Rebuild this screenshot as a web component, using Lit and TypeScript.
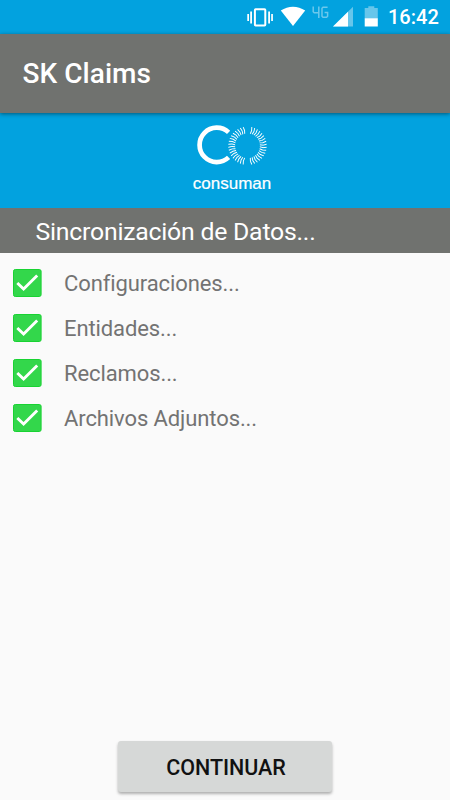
import { LitElement, html, svg, css } from "lit";
import { customElement, property } from "lit/decorators.js";

@customElement("status-bar")
class StatusBar extends LitElement {
  static styles = css`
    :host {
      display: flex;
      justify-content: flex-end;
      height: 34px;
      background: #02a2df;
      color: #fff;
    }
    .icons { flex: none; display: block; }
    .time {
      width: 62px;
      box-sizing: border-box;
      font: 500 20px/35px Roboto, sans-serif;
      white-space: nowrap;
    }
  `;
  render() {
    return html`
      <svg class="icons" width="148" height="34" viewBox="240 0 148 34" fill="#fff">
        <rect x="254.9" y="9.3" width="10.4" height="16.2" rx="0.8" fill="none" stroke="#fff" stroke-width="2" />
        <path d="M250.2 11.5h1.8v12h-1.8zM247.3 14h1.7v7h-1.7zM268.2 11.5h1.8v12h-1.8zM271.2 14h1.7v7h-1.7z" />
        <path d="M280.8 10.6Q286.5 6.8 293 6.8Q299.5 6.8 305.2 10.6L293 26z" />
        <g fill="none" stroke="#6cc8ec" stroke-width="1.5">
          <path d="M313.2 6.5v5.3l1 1h4.6M318.8 6.5v11.5" />
          <path d="M327.6 7.3h-4.6l-1 1v8l1 1h3.6l1-1v-3.8h-3" />
        </g>
        <path d="M353 6.8V26.5H333z" fill="#67c6eb" />
        <path d="M348 11.7V26.5H333z" />
        <path d="M368.3 6.2h6v1.8h3.5v10.3H364.7V8h3.6z" fill="#67c6eb" />
        <path d="M364.7 18.2h13.1v8.3H364.7z" />
      </svg>
      <span class="time">16:42</span>
    `;
  }
}

@customElement("brand-logo")
class BrandLogo extends LitElement {
  static styles = css`
    :host { display: block; height: 95px; }
    .mark { display: block; margin: 0 auto; }
    .name { font: 16.2px "Liberation Sans", Arial, sans-serif; }
  `;
  render() {
    const perSide = 18;
    const rays = Array.from({ length: perSide * 2 }, (_, i) => {
      const side = i < perSide ? 0 : 180;
      return side + 13 + (i % perSide) * (154 / (perSide - 1));
    });
    return html`
      <svg class="mark" width="100" height="95" viewBox="175 113 100 95">
        <path d="M228.6 132.4A17.2 17.2 0 1 0 228.6 157.4" fill="none" stroke="#fff" stroke-width="4.7" />
        <g fill="none" stroke="#fff" stroke-width="0.95">
          ${rays.map((a) => svg`<path d="M0-12.4L0.6-15.6L0-19.2" transform="translate(247.5 145.8) rotate(${a})" />`)}
        </g>
        <text class="name" x="192.8" y="189" textLength="78.5" lengthAdjust="spacingAndGlyphs" fill="#fff" stroke="#fff" stroke-width="0.2">consuman</text>
      </svg>
    `;
  }
}

@customElement("sync-item")
class SyncItem extends LitElement {
  static styles = css`
    :host {
      display: flex;
      align-items: center;
      gap: 22px;
      height: 45px;
      padding-left: 13px;
      color: #737373;
      font: 22px/45px Roboto, sans-serif;
      letter-spacing: -0.1px;
    }
    .box { flex: none; display: block; }
    .label { white-space: nowrap; }
  `;
  @property() label = "";
  render() {
    return html`
      <svg class="box" width="29" height="28" viewBox="0 0 29 28">
        <rect x="0.5" y="0.5" width="27.6" height="27" rx="1.8" fill="#33d74b" stroke="#18d332" />
        <path d="M4.3 14L10.6 20L24.2 6.5" fill="none" stroke="#fff" stroke-width="2.9" />
      </svg>
      <span class="label">${this.label}</span>
    `;
  }
}

@customElement("app-root")
class AppRoot extends LitElement {
  static styles = css`
    :host {
      display: flex;
      flex-direction: column;
      height: 800px;
      background: #fafafa;
      font-family: Roboto, sans-serif;
    }
    .toolbar {
      position: relative;
      height: 78.5px;
      box-sizing: border-box;
      padding-left: 22.5px;
      background: #70726f;
      color: #fff;
      font-size: 28px;
      font-weight: 500;
      line-height: 79px;
      letter-spacing: 0.05px;
      box-shadow: 0 1px 4px rgba(0, 0, 0, 0.45);
    }
    .brand { height: 95.5px; background: #02a2df; }
    .heading {
      height: 45px;
      padding-left: 35.5px;
      background: #70726f;
      color: #fff;
      font-size: 24.8px;
      line-height: 47px;
      letter-spacing: -0.22px;
    }
    .list { flex: 1; padding-top: 7.5px; }
    .go {
      align-self: center;
      width: 214px;
      height: 51px;
      margin-bottom: 8px;
      padding: 2px 0 0 2px;
      border: 0;
      border-radius: 3px;
      background: #d6d8d7;
      color: #111;
      font: 500 21.5px/49px Roboto, sans-serif;
      letter-spacing: -0.05px;
      box-shadow: 0 2px 3px rgba(0, 0, 0, 0.3);
    }
  `;
  private items = ["Configuraciones...", "Entidades...", "Reclamos...", "Archivos Adjuntos..."];
  render() {
    return html`
      <status-bar></status-bar>
      <div class="toolbar">SK Claims</div>
      <div class="brand"><brand-logo></brand-logo></div>
      <div class="heading">Sincronización de Datos...</div>
      <div class="list">${this.items.map((t) => html`<sync-item .label=${t}></sync-item>`)}</div>
      <button class="go">CONTINUAR</button>
    `;
  }
}
